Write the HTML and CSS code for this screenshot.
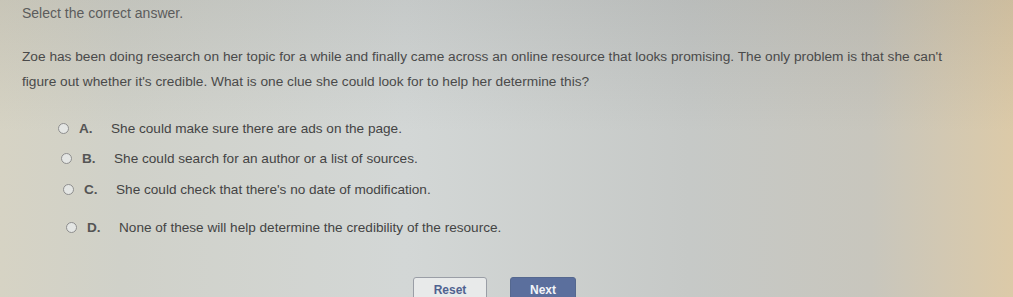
FILE: index.html
```html
<!DOCTYPE html>
<html lang="en">
<head>
  <meta charset="UTF-8" />
  <meta name="viewport" content="width=device-width, initial-scale=1.0" />
  <title>Select the correct answer</title>
  <link rel="stylesheet" href="styles.css">
</head>
<body>
  <div class="question">
    <p class="prompt">Select the correct answer.</p>
    <p class="stem">Zoe has been doing research on her topic for a while and finally came across an online resource that looks promising. The only problem is that she can't figure out whether it's credible. What is one clue she could look for to help her determine this?</p>

    <div class="options">
      <label class="option">
        <span class="radio"></span>
        <span class="letter">A.</span>
        <span class="text">She could make sure there are ads on the page.</span>
      </label>
      <label class="option">
        <span class="radio"></span>
        <span class="letter">B.</span>
        <span class="text">She could search for an author or a list of sources.</span>
      </label>
      <label class="option">
        <span class="radio"></span>
        <span class="letter">C.</span>
        <span class="text">She could check that there's no date of modification.</span>
      </label>
      <label class="option">
        <span class="radio"></span>
        <span class="letter">D.</span>
        <span class="text">None of these will help determine the credibility of the resource.</span>
      </label>
    </div>

    <div class="buttons">
      <button class="btn reset">Reset</button>
      <button class="btn next">Next</button>
    </div>
  </div>
</body>
</html>
```

FILE: styles.css
```css
* {
  margin: 0;
  padding: 0;
  box-sizing: border-box;
}
html, body {
  height: 100%;
}
body {
  font-family: 'Liberation Sans', Arial, sans-serif;
  color: #4a4a4a;
  overflow: hidden;
  background:
    linear-gradient(to bottom, rgba(60, 60, 60, 0.09), rgba(255, 255, 255, 0) 45%),
    linear-gradient(to right, #d6d3c4 0%, #d0d1c9 12%, #d3d7d6 40%, #c6c9c7 68%, #c8c6bd 86%, #dccaa8 100%);
}
.question {
  padding: 5px 0 0 22px;
}
.prompt {
  font-size: 14px;
  color: #5c5c5c;
  line-height: 16px;
}
.stem {
  margin-top: 23px;
  width: 925px;
  font-size: 13.7px;
  line-height: 25px;
  color: #4a4a4a;
}
.options {
  display: flex;
  flex-direction: column;
  margin-top: 19px;
  padding-left: 36px;
}
.option {
  display: flex;
  align-items: center;
  height: 30px;
  font-size: 13.6px;
  color: #444;
}
.option:nth-child(2) { padding-left: 3px; }
.option:nth-child(3) { padding-left: 5px; height: 32px; }
.option:nth-child(4) { padding-left: 8px; height: 36px; margin-top: 4px; }
.radio {
  width: 11px;
  height: 11px;
  border: 1.5px solid #8e8e8e;
  border-radius: 50%;
  background: #e4e6e4;
}
.letter {
  width: 32px;
  margin-left: 10px;
  font-weight: bold;
  color: #555;
}
.buttons {
  display: flex;
  gap: 23px;
  margin-top: 32px;
  padding-left: 391px;
}
.btn {
  height: 24px;
  border-radius: 3px;
  font-family: 'Liberation Sans', Arial, sans-serif;
  font-size: 12px;
  font-weight: bold;
  padding-top: 1px;
}
.reset {
  width: 74px;
  background: #e8eaea;
  border: 1px solid #9a9ea6;
  color: #4f6290;
}
.next {
  width: 66px;
  background: #5b6f9d;
  border: 1px solid #55688f;
  color: #f2f4f8;
}
```
